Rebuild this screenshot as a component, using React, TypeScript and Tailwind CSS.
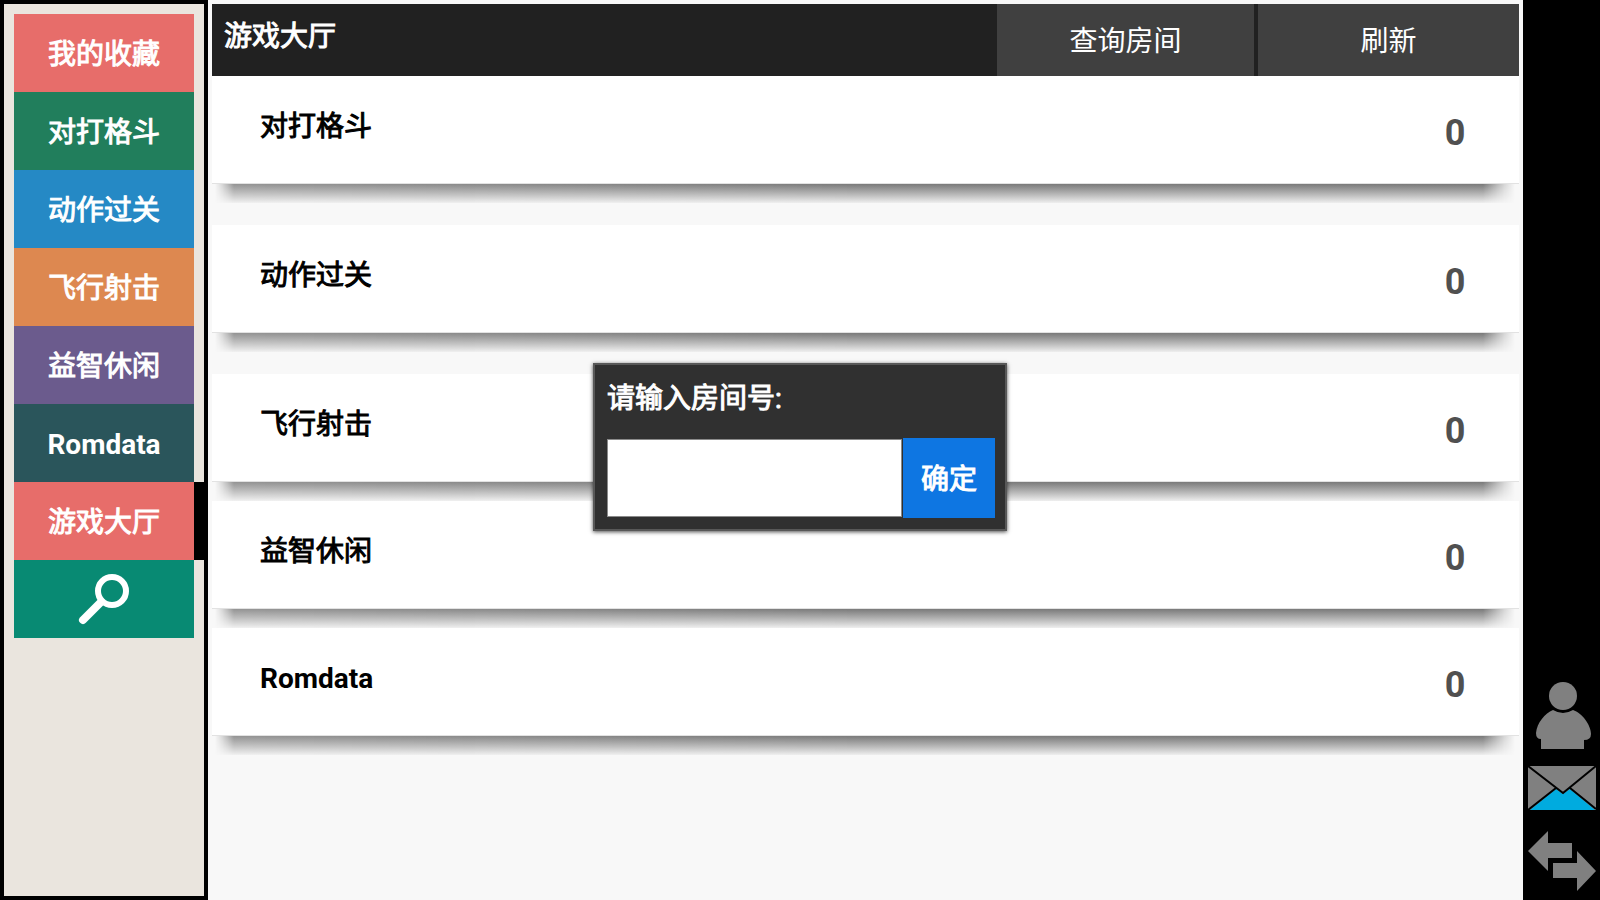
import { useState } from 'react';

interface Category {
  label: string;
  color: string;
}

interface Room {
  label: string;
  count: number;
  spacing: string;
}

const categories: Category[] = [
  { label: '我的收藏', color: 'bg-[#e76d6a]' },
  { label: '对打格斗', color: 'bg-[#217e5c]' },
  { label: '动作过关', color: 'bg-[#2589c5]' },
  { label: '飞行射击', color: 'bg-[#dd8850]' },
  { label: '益智休闲', color: 'bg-[#6b5b8d]' },
  { label: 'Romdata', color: 'bg-[#2a555b]' },
  { label: '游戏大厅', color: 'bg-[#e76d6a]' },
];

const rooms: Room[] = [
  { label: '对打格斗', count: 0, spacing: 'mb-[22px]' },
  { label: '动作过关', count: 0, spacing: 'mb-[22px]' },
  { label: '飞行射击', count: 0, spacing: '' },
  { label: '益智休闲', count: 0, spacing: '' },
  { label: 'Romdata', count: 0, spacing: '' },
];

// Chinese labels are medium weight, latin ones bold
const weight = (label: string) =>
  /^[\w ]+$/.test(label) ? 'font-bold' : 'font-normal [-webkit-text-stroke:1px_currentColor]';

function SearchIcon() {
  return (
    <svg viewBox="0 0 52 52" className="w-[52px] h-[52px]" fill="none" stroke="#fff">
      <circle cx="34" cy="18" r="14" strokeWidth="6" />
      <path d="M23 29 L5 47" strokeWidth="8" strokeLinecap="round" />
    </svg>
  );
}

function UserIcon() {
  return (
    <svg viewBox="0 0 68 68" className="w-[68px] h-[68px]" fill="#808080">
      <circle cx="35" cy="14" r="14" />
      <path d="M25 28 Q35 34 45 28 C54 31 63 43 63 52 Q63 58 56 58 V67 H13 V57 Q8 57 8 51 C9 41 17 31 25 28 Z" />
    </svg>
  );
}

function MailIcon() {
  return (
    <svg viewBox="0 0 68 44" className="w-[68px] h-11">
      <path d="M0 0 H68 V44 H0 Z" fill="#808080" />
      <path d="M2 44 L28 23 L35 28 L42 23 L67 44 Z" fill="#00abdf" />
      <path d="M0 0 L35 27 L68 0 M28 22 L0 44 M42 22 L68 43" fill="none" stroke="#000" strokeWidth="2" />
    </svg>
  );
}

function SwapIcon() {
  return (
    <svg viewBox="0 0 68 60" className="w-[68px] h-[60px]" fill="#808080">
      <path d="M0 20 L20 0 V12 H44 V27 H20 V40 Z" />
      <path d="M68 40 L49 20 V32 H25 V47 H49 V60 Z" />
    </svg>
  );
}

function RoomRow({ room }: { room: Room }) {
  return (
    <li className={room.spacing}>
      <button className="w-full h-[108px] px-12 flex justify-between text-left bg-white border-b border-[#e2e2e2]">
        <span className={`pt-[33px] text-[28px] leading-9 text-black ${weight(room.label)}`}>{room.label}</span>
        <span className="pt-[37px] mr-1 w-6 text-center text-4xl leading-10 font-bold text-[#505050]">{room.count}</span>
      </button>
      {/* Soft shadow strip, fades out at both ends */}
      <div className="h-[19px] bg-linear-to-b from-[#7a7a7a] to-[#efefef] mask-[linear-gradient(to_right,transparent_3px,rgba(0,0,0,0.25)_10px,rgba(0,0,0,0.8)_22px,black_50%,black_calc(100%-36px),rgba(0,0,0,0.25)_calc(100%-14px),transparent_calc(100%-4px))]" />
    </li>
  );
}

export default function App() {
  const [active, setActive] = useState('游戏大厅');
  const [roomId, setRoomId] = useState('');

  return (
    <div className="relative flex h-screen bg-black font-[Roboto,'Noto_Sans_CJK_SC',sans-serif]">
      {/* Category sidebar */}
      <nav className="w-52 shrink-0 bg-[#eae5de] border-4 border-black pt-[10px] pl-[10px]">
        {categories.map((item) => (
          <div key={item.label} className={active === item.label ? 'bg-black pr-[10px]' : 'pr-[10px]'}>
            <button
              onClick={() => setActive(item.label)}
              className={`block w-full h-[78px] pt-[3px] text-[28px] text-white ${item.color} ${weight(item.label)}`}
            >
              {item.label}
            </button>
          </div>
        ))}
        <div className="pr-[10px]">
          <button aria-label="搜索" className="w-full h-[78px] flex items-center justify-center bg-[#088a73]">
            <SearchIcon />
          </button>
        </div>
      </nav>

      {/* Lobby */}
      <main className="flex-1 p-1 bg-[#f8f8f8]">
        <header className="h-[72px] flex bg-[#212121] text-white text-[28px]">
          <h1 className={`flex-1 pl-3 pt-[13px] leading-10 ${weight('游戏大厅')}`}>游戏大厅</h1>
          <div className="flex gap-1">
            <button className="w-[257px] pt-[3px] bg-[#404040]">查询房间</button>
            <button className="w-[261px] pt-[3px] bg-[#404040]">刷新</button>
          </div>
        </header>
        <ul>
          {rooms.map((room) => (
            <RoomRow key={room.label} room={room} />
          ))}
        </ul>
      </main>

      {/* Account shortcuts */}
      <aside className="w-[77px] shrink-0 pb-[9px] pl-[5px] pr-1 flex flex-col justify-end items-center gap-4">
        <button aria-label="用户"><UserIcon /></button>
        <button aria-label="邮件" className="pb-[5px]"><MailIcon /></button>
        <button aria-label="切换"><SwapIcon /></button>
      </aside>

      {/* Room number dialog */}
      <div className="absolute inset-0 pb-[6px] flex items-center justify-center pointer-events-none">
        <form
          onSubmit={(e) => e.preventDefault()}
          className="w-[414px] h-[168px] pl-3 pr-[10px] pt-[14px] bg-[#303030] border-2 border-[#585858] shadow-[0_1px_4px_rgba(0,0,0,0.7)] pointer-events-auto"
        >
          <label htmlFor="room-id" className={`block text-[28px] leading-10 text-white ${weight('请输入房间号:')}`}>请输入房间号:</label>
          <div className="mt-[19px] flex items-center gap-px">
            <input
              id="room-id"
              value={roomId}
              onChange={(e) => setRoomId(e.target.value)}
              className="flex-1 min-w-0 h-[78px] px-3 bg-white border border-[#8a8a8a] text-[28px] text-black outline-none"
            />
            <button type="submit" className={`w-[92px] h-20 pt-[3px] bg-[#0e76e2] text-[28px] text-white ${weight('确定')}`}>确定</button>
          </div>
        </form>
      </div>
    </div>
  );
}
